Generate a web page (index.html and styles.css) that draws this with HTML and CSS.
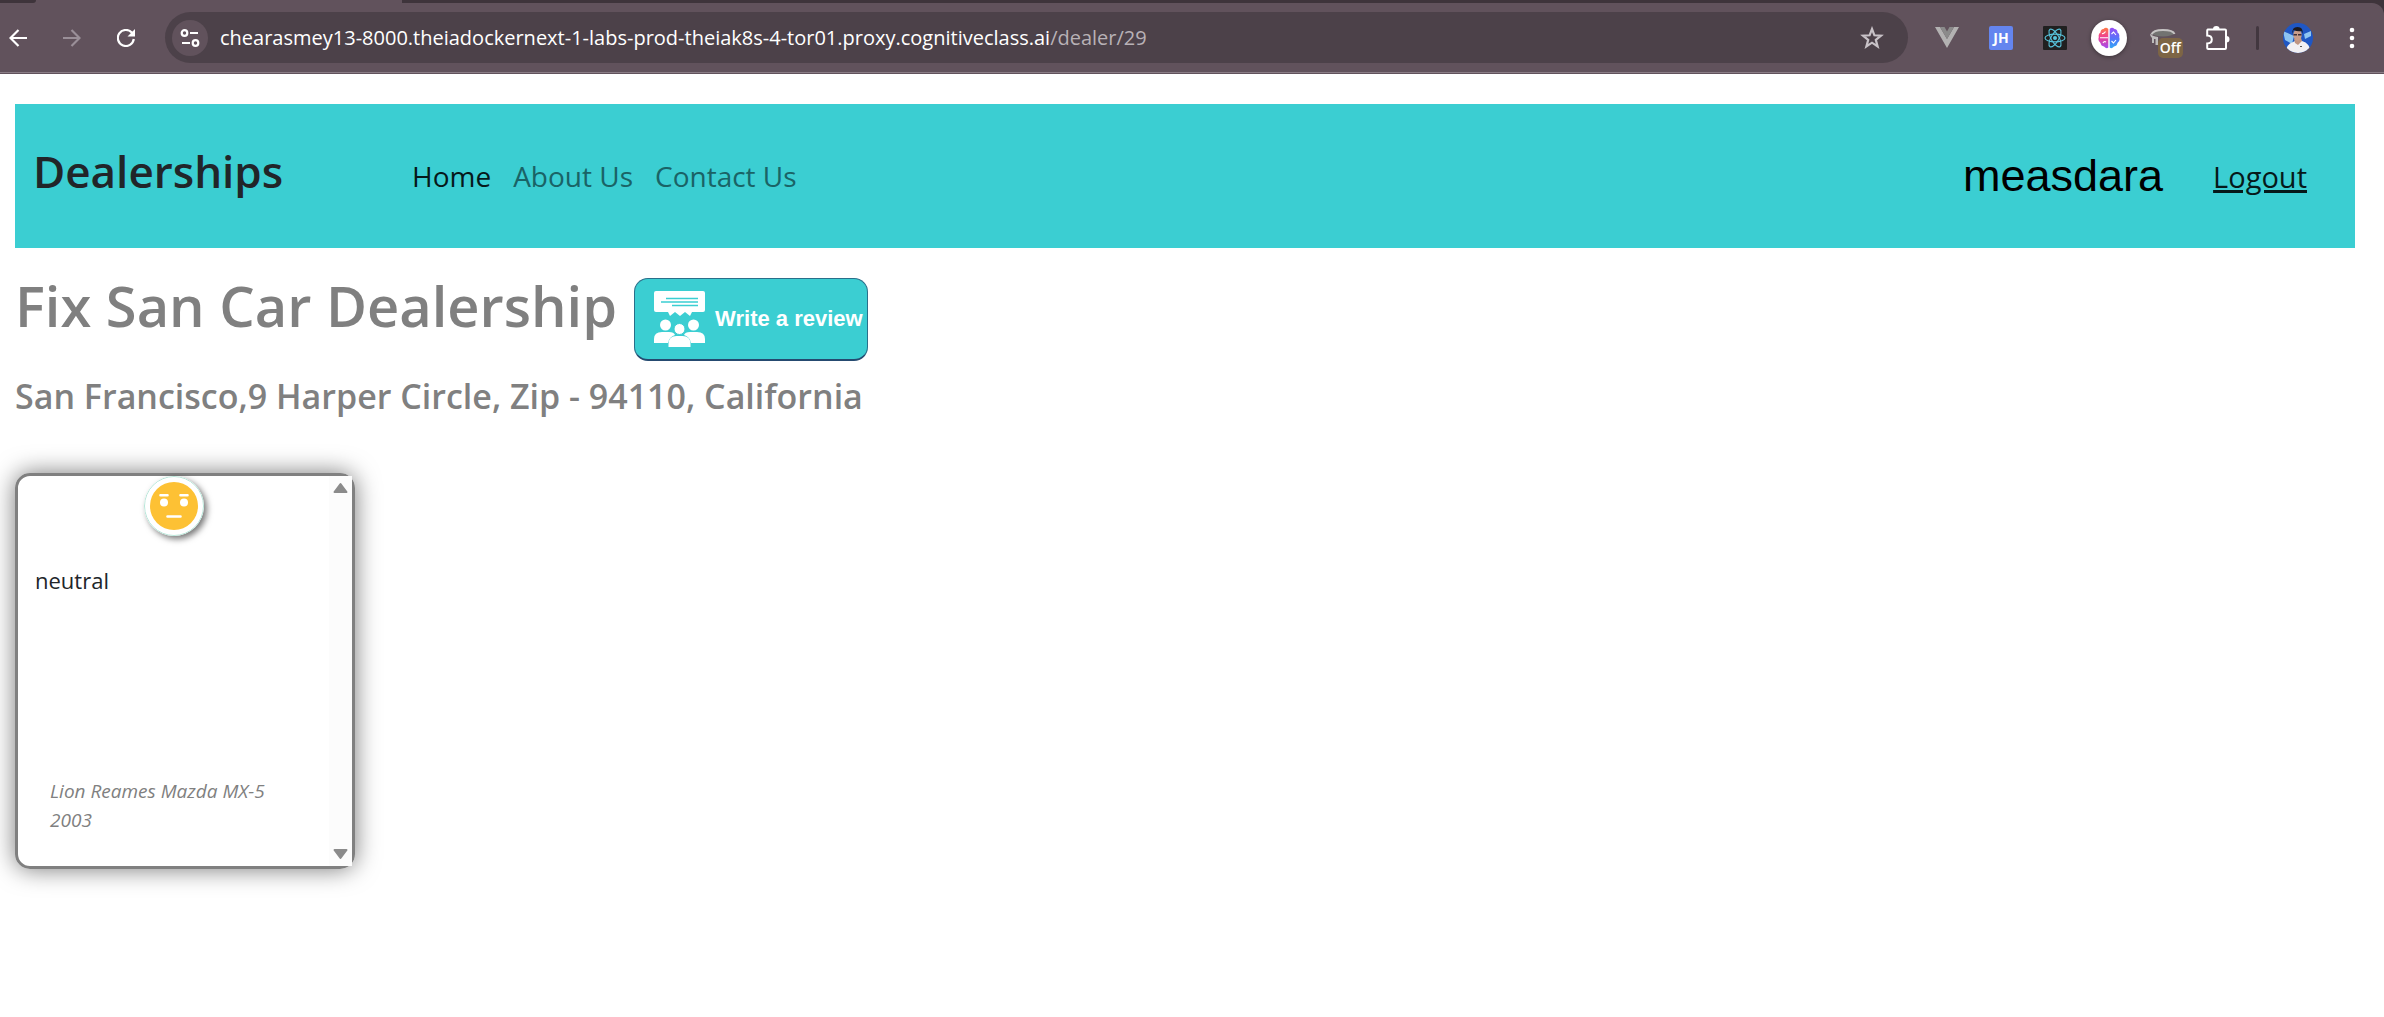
FILE: index.html
```html
<!DOCTYPE html>
<html lang="en">
<head>
<meta charset="utf-8">
<title>Dealerships</title>
<link rel="stylesheet" href="styles.css">
</head>
<body>
<div class="browser">
  <div class="tabstrip"><span class="tab-edge"></span><span class="tab-rest"></span></div>
  <div class="toolbar">
    <div class="nav-buttons">
      <button class="tool" aria-label="Back"><svg width="18" height="18" viewBox="0 0 18 18"><path d="M18 9H2M9.500 1L1.500 9l8 8" fill="none" stroke="#fff" stroke-width="2.200"/></svg></button>
      <button class="tool" aria-label="Forward"><svg width="18" height="18" viewBox="0 0 18 18"><path d="M0 9h16M8.500 1l8 8-8 8" fill="none" stroke="#9a8f98" stroke-width="2.200"/></svg></button>
      <button class="tool" aria-label="Reload"><svg width="18" height="18" viewBox="0 0 18 18"><path d="M16.800 10A8 8 0 1 1 14.800 3.600L17 6" fill="none" stroke="#fff" stroke-width="2.200"/><path d="M18 0v7.500h-7.500z" fill="#fff"/></svg></button>
    </div>
    <div class="omnibox">
      <button class="site-info" aria-label="Site information"><svg width="20" height="18" viewBox="0 0 20 18" fill="none" stroke="#fff" stroke-width="2.200"><circle cx="4.500" cy="4" r="2.800"/><path d="M10 4h8M2 14h8"/><circle cx="15.500" cy="14" r="2.800"/></svg></button>
      <span class="url">chearasmey13-8000.theiadockernext-1-labs-prod-theiak8s-4-tor01.proxy.cognitiveclass.ai<span class="path">/dealer/29</span></span>
      <button class="star" aria-label="Bookmark"><svg width="24" height="24" viewBox="0 0 24 24"><path d="M12 3l2.400 6.300 6.600.4-5.200 4.200 1.800 6.500-5.600-3.700-5.600 3.700 1.800-6.500L3 9.700l6.600-.4z" fill="none" stroke="#c8c2c7" stroke-width="2.200"/></svg></button>
    </div>
    <div class="extensions">
      <button class="ext" aria-label="Vue devtools"><svg width="24" height="22" viewBox="0 0 24 22"><path d="M0 0h5l7 12 7-12h5L12 21z" fill="#b3b2b2"/><path d="M5 0h4.500L12 4.500 14.500 0H19l-7 12z" fill="#8b8b8b"/></svg></button>
      <button class="ext jh">JH</button>
      <button class="ext" aria-label="React devtools"><svg width="24" height="24" viewBox="0 0 24 24"><rect width="24" height="24" rx="1" fill="#202020"/><g fill="none" stroke="#58c4dc" stroke-width="1.100"><ellipse cx="12" cy="12" rx="10" ry="3.900"/><ellipse cx="12" cy="12" rx="10" ry="3.900" transform="rotate(60 12 12)"/><ellipse cx="12" cy="12" rx="10" ry="3.900" transform="rotate(120 12 12)"/></g><circle cx="12" cy="12" r="2" fill="#58c4dc"/></svg></button>
      <button class="ext brain" aria-label="Assistant"><svg width="22" height="22" viewBox="0 0 22 22"><defs><linearGradient id="bl" x1="0" y1="0" x2="0" y2="1"><stop offset="0" stop-color="#ff7a45"/><stop offset=".45" stop-color="#ee3f92"/><stop offset="1" stop-color="#a04df0"/></linearGradient><linearGradient id="br" x1="0" y1="0" x2="0" y2="1"><stop offset="0" stop-color="#9a4df5"/><stop offset=".6" stop-color="#4f79fa"/><stop offset="1" stop-color="#35a8f5"/></linearGradient></defs><path d="M10.300 2Q8-.5 5.500 2 2.500 2 2.500 5.500 0 7 .8 10-.5 14 2.500 16q.5 3 3.500 3.500 2.500 2.800 4.300 1z" fill="url(#bl)"/><path d="M11.700 2q2.300-2.500 4.800 0 3 0 3 3.500 2.500 1.500 1.700 4.500 1.300 4-1.700 6-.5 3-3.500 3.500-2.500 2.800-4.300 1z" fill="url(#br)"/><path d="M2 10.800h8M4 6.500q2 .5 3.500-2M5 16q1-2.200 3-1M13.500 7l2-2 2.500 3M13.500 14l2 2 2.500-3" fill="none" stroke="#fff" stroke-width="1.100"/></svg></button>
      <button class="ext" aria-label="Extension off"><svg width="26" height="22" viewBox="0 0 26 22"><ellipse cx="13" cy="6.500" rx="10.500" ry="3" fill="#727371"/><path d="M1.500 7.500Q3 3 13 3t11.500 4" fill="none" stroke="#c5c3c3" stroke-width="2"/><path d="M0 6.500q2 2.500 8 3.500v8H5.500v-6H4v4H2v-5q-2-1-2-4.500z" fill="#bebcbc"/></svg><span class="off">Off</span></button>
      <button class="ext" aria-label="Extensions"><svg width="26" height="26" viewBox="0 0 26 26"><path d="M3.200 4.500H21q1 0 1 1V23q0 1-1 1H4.200q-1 0-1-1v-4.500q4.600-.2 4.600-4t-4.600-4V5.500q0-1 1-1z" fill="none" stroke="#fff" stroke-width="2"/><path d="M9 4.200a3.300 3.300 0 0 1 6.600 0zM22.300 11a3.200 3.200 0 0 1 0 6.400z" fill="#fff"/></svg></button>
      <span class="divider"></span>
      <button class="ext" aria-label="Profile"><svg width="30" height="30" viewBox="0 0 30 30"><defs><clipPath id="av"><circle cx="15" cy="15" r="15"/></clipPath></defs><g clip-path="url(#av)"><path d="M0 0h30v30H0z" fill="#1f57c4"/><path d="M0 8l11 5-2 8-7-4zM28 8l-7 3 1 5 6-3z" fill="#8ec5f2"/><path d="M3 30q0-9 7-11l4-2 5 1q8 2 9 12z" fill="#f2f0f3"/><path d="M11 16l1 4 3 2 4-4-1-3z" fill="#c09582"/><ellipse cx="14.500" cy="12" rx="4.200" ry="5.800" fill="#c99d89"/><path d="M9.500 11Q8.500 4 14.500 4t5 7l-1-3q-4 1-8-1z" fill="#1c1a20"/><path d="M10.500 11h3.500v1.500h-3.500zm4.500 0h3.500v1.500H15z" fill="#413036"/><path d="M17 23h2v1h-2z" fill="#555"/></g></svg></button>
      <button class="ext" aria-label="Menu"><svg width="6" height="22" viewBox="0 0 6 22" fill="#fff"><circle cx="3" cy="3" r="2.300"/><circle cx="3" cy="11" r="2.300"/><circle cx="3" cy="19" r="2.300"/></svg></button>
    </div>
  </div>
</div>

<div class="page">
  <nav class="navbar">
    <h2 class="brand">Dealerships</h2>
    <div class="links">
      <a class="active" href="#home">Home</a>
      <a href="#about">About Us</a>
      <a href="#contact">Contact Us</a>
    </div>
    <div class="account">
      <span class="user">measdara</span>
      <a class="logout" href="#logout">Logout</a>
    </div>
  </nav>

  <main>
    <div class="title-row">
      <h1>Fix San Car Dealership</h1>
      <button class="review-button">
        <svg width="51" height="56" viewBox="0 0 51 56" fill="#fff"><path d="M2 0h47q2 0 2 2v17q0 2-2 2H38l-2 4-5-4-5 4-5-4-5 4-2-4H2q-2 0-2-2V2q0-2 2-2z"/><path d="M12 7.500h32M7 11h37M18 14.500h26" stroke="#3bced2" stroke-width="1.500"/><circle cx="11.500" cy="34" r="5.500"/><circle cx="39.500" cy="34" r="5.500"/><path d="M0 52v-4q0-7 8-7h7q5 0 6 3-6 2-7 8zM51 52v-4q0-7-8-7h-7q-5 0-6 3 6 2 7 8z"/><circle cx="25.500" cy="38" r="5.500" stroke="#3bced2"/><path d="M14.500 56v-3q0-8 8-8h6q8 0 8 8v3z"/></svg>
        <span>Write a review</span>
      </button>
    </div>
    <h4>San Francisco,9 Harper Circle, Zip - 94110, California</h4>

    <article class="review">
      <div class="review-body">
        <svg class="face" width="60" height="60" viewBox="0 0 60 60" role="img" aria-label="Neutral"><circle cx="30" cy="30" r="29.500" fill="#fff" stroke="#b5e6d8"/><circle cx="30" cy="30" r="24" fill="#fdc134"/><g stroke="#fff" stroke-width="2.600" stroke-linecap="round"><path d="M16.500 19.300h7M36.500 19.300h7M23.500 40.500h13"/></g><circle cx="20" cy="26.500" r="4" fill="#fff"/><circle cx="40" cy="26.500" r="4" fill="#fff"/></svg>
        <p class="review-text">neutral</p>
        <p class="reviewer">Lion Reames Mazda MX-5 2003</p>
      </div>
      <div class="scrollbar">
        <svg width="15" height="12" viewBox="0 0 15 12"><path d="M7.500 2L13.500 10h-12z" fill="#8b8b8b" stroke="#8b8b8b" stroke-width="2" stroke-linejoin="round"/></svg>
        <svg width="15" height="12" viewBox="0 0 15 12"><path d="M7.500 10L1.500 2h12z" fill="#8b8b8b" stroke="#8b8b8b" stroke-width="2" stroke-linejoin="round"/></svg>
      </div>
    </article>
  </main>
</div>
</body>
</html>
```
FILE: styles.css
```css
* { box-sizing: border-box; }
body {
  margin: 0;
  background: #fff;
  color: #212529;
  font-family: "Open Sans", "Noto Sans", sans-serif;
}
h1, h2, h4, p { margin: 0; }
svg { display: block; }
button {
  padding: 0;
  border: 0;
  background: none;
  font-family: inherit;
}

.browser { background: #3e343b; border-bottom: 1px solid #61525c; }
.tabstrip { display: flex; justify-content: space-between; height: 3px; background: #61525c; }
.tab-edge { width: 36px; background: #3e343b; border-bottom-right-radius: 3px; }
.tab-rest { width: calc(100% - 402px); background: #3e343b; }
.toolbar {
  display: flex;
  align-items: center;
  gap: 12px;
  height: 70px;
  padding-right: 5px;
  border-bottom: 1px solid #8a7d86;
  border-top-right-radius: 12px;
  background: #61525c;
}
.nav-buttons { display: flex; }
.tool { display: grid; place-items: center; width: 54px; height: 36px; }
.nav-buttons .tool:first-child { width: 36px; margin-right: 9px; }
.omnibox {
  display: flex;
  flex: 1;
  align-items: center;
  height: 51px;
  padding: 0 24px 0 7px;
  border-radius: 26px;
  background: #4c4149;
}
.site-info {
  display: grid;
  place-items: center;
  width: 36px;
  height: 36px;
  border-radius: 50%;
  background: #61525c;
}
.url { flex: 1; margin-left: 12px; color: #fff; font-size: 20px; white-space: nowrap; }
.path { color: #b8b1b6; }
.extensions { display: flex; align-items: center; }
.ext { position: relative; display: grid; place-items: center; width: 54px; height: 36px; }
.jh {
  width: 24px;
  height: 24px;
  margin: 0 15px;
  border-radius: 2px;
  background: #6485ef;
  color: #fff;
  font-size: 14px;
  font-weight: 700;
}
.brain { width: 36px; margin: 0 9px; border-radius: 50%; background: #fff; box-shadow: 0 1px 4px #0006; }
.off {
  position: absolute;
  right: 7px;
  bottom: -2px;
  padding: 0 2px;
  border-radius: 5px;
  background: #7d6545;
  color: #fff;
  font-size: 14px;
  font-weight: 600;
  line-height: 20px;
}
.divider { width: 3px; height: 24px; margin: 0 12px; border-radius: 2px; background: #42373f; }

.page { padding: 30px 29px 30px 15px; }
.navbar {
  display: flex;
  align-items: center;
  height: 144px;
  padding: 0 48px 0 18px;
  background: #3bced2;
}
.brand { width: 379px; padding-bottom: 11px; font-size: 44px; font-weight: 600; }
.links { display: flex; flex: 1; gap: 22px; font-size: 28px; }
.links a { color: #1a6366; text-decoration: none; }
.links .active { color: #06191a; }
.account { display: flex; align-items: center; gap: 50px; }
.user { color: #000; font-family: "Liberation Sans", Arial, sans-serif; font-size: 45px; }
.logout { color: #06191a; font-size: 29px; text-decoration-thickness: 3px; }

main { padding-top: 30px; color: #808080; }
.title-row { display: flex; align-items: flex-start; gap: 17px; }
h1 { font-size: 56px; font-weight: 600; line-height: 54px; white-space: nowrap; }
.review-button {
  display: flex;
  align-items: center;
  gap: 10px;
  height: 83px;
  padding: 0 4px 0 19px;
  border: 1px solid #2a6f8a;
  border-bottom: 2px solid #254a70;
  border-radius: 14px;
  background: #3bced2;
  color: #fff;
  font-family: "Liberation Sans", Arial, sans-serif;
  font-size: 22px;
  font-weight: 700;
  white-space: nowrap;
}
h4 { margin-top: 13px; font-size: 34px; font-weight: 600; line-height: 44px; }
.review {
  display: flex;
  width: 340px;
  height: 396px;
  margin-top: 55px;
  border: 3px solid #808080;
  border-radius: 15px;
  box-shadow: 0 0 24px #0008;
}
.review-body { display: flex; flex: 1; flex-direction: column; }
.face { align-self: center; border-radius: 50%; box-shadow: 3px 3px 6px #0008; }
.review-text { flex: 1; padding: 26px 17px; color: #212529; font-size: 22px; line-height: 36px; }
.reviewer { padding: 0 32px 31px; font-size: 19px; font-style: italic; line-height: 29px; }
.scrollbar {
  display: flex;
  flex-direction: column;
  align-items: center;
  justify-content: space-between;
  width: 23px;
  padding: 6px 0;
  background: #fcfcfc;
}
```
